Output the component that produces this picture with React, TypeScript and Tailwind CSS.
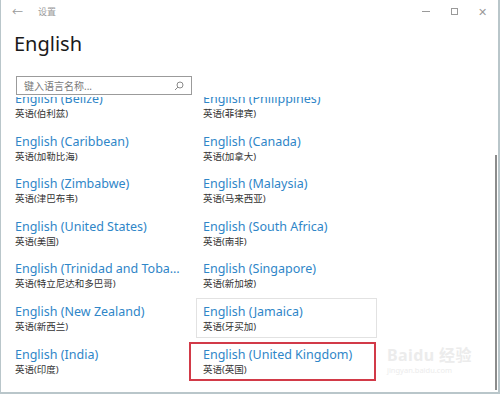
import React from "react";

type Lang = { en: string; zh: string; hover?: boolean; marked?: boolean };

const rows: [Lang, Lang][] = [
  [
    { en: "English (Belize)", zh: "英语(伯利兹)" },
    { en: "English (Philippines)", zh: "英语(菲律宾)" },
  ],
  [
    { en: "English (Caribbean)", zh: "英语(加勒比海)" },
    { en: "English (Canada)", zh: "英语(加拿大)" },
  ],
  [
    { en: "English (Zimbabwe)", zh: "英语(津巴布韦)" },
    { en: "English (Malaysia)", zh: "英语(马来西亚)" },
  ],
  [
    { en: "English (United States)", zh: "英语(美国)" },
    { en: "English (South Africa)", zh: "英语(南非)" },
  ],
  [
    { en: "English (Trinidad and Toba…", zh: "英语(特立尼达和多巴哥)" },
    { en: "English (Singapore)", zh: "英语(新加坡)" },
  ],
  [
    { en: "English (New Zealand)", zh: "英语(新西兰)" },
    { en: "English (Jamaica)", zh: "英语(牙买加)", hover: true },
  ],
  [
    { en: "English (India)", zh: "英语(印度)" },
    { en: "English (United Kingdom)", zh: "英语(英国)", marked: true },
  ],
];

const font = { fontFamily: '"Noto Sans", "Noto Sans CJK SC", sans-serif' };

function LangItem({ item }: { item: Lang }) {
  return (
    <div
      className={
        "relative h-[40px] w-[181px] px-[6px] pt-[4px] " +
        (item.hover ? "border border-[#e2e2e2]" : "border border-transparent")
      }
    >
      <div className="text-[12.5px] leading-[17px] text-[#2f86c8] whitespace-nowrap">{item.en}</div>
      <div className="text-[9.5px] leading-[13px] text-[#333]">{item.zh}</div>
      {item.marked && (
        <div className="absolute left-[-8px] top-[0px] h-[39px] w-[187px] border-2 border-[#d23a48]" />
      )}
    </div>
  );
}

function SearchIcon() {
  return (
    <svg width="10" height="10" viewBox="0 0 10 10" fill="none" stroke="#8a8a8a" strokeWidth="1">
      <circle cx="6" cy="4" r="3" />
      <path d="M3.9 6.1 L1 9" />
    </svg>
  );
}

export default function App() {
  return (
    <div className="w-[500px] h-[395px] bg-white overflow-hidden" style={font}>
      <div className="relative h-[394px] w-[500px] border-l border-r-2 border-b-2 border-[#b9c6ca] flex flex-col">
        {/* title bar */}
        <div className="h-[22px] flex items-center text-[#9a9a9a]">
          <span className="ml-[11px] text-[11px] leading-none">←</span>
          <span className="ml-[15px] text-[9px] leading-none">设置</span>
          <div className="ml-auto flex items-center">
            <span className="w-[28px] flex justify-center">
              <span className="block w-[8px] h-px bg-[#9a9a9a]" />
            </span>
            <span className="w-[28px] flex justify-center">
              <span className="block w-[7px] h-[7px] border border-[#9a9a9a]" />
            </span>
            <span className="w-[28px] flex justify-center mr-[2px] text-[11px] leading-none">✕</span>
          </div>
        </div>

        <div className="ml-[13px] mt-[9px] text-[20px] leading-[26px] text-[#1a1a1a]">English</div>

        <div className="ml-[15px] mt-[19px] w-[176px] h-[19px] border border-[#9b9b9b] flex items-center px-[7px]">
          <span className="text-[10px] text-[#7a7a7a] leading-none">键入语言名称...</span>
          <span className="ml-auto">
            <SearchIcon />
          </span>
        </div>

        <div className="mt-[2px] flex-1 overflow-hidden">
          <div className="ml-[7px] mt-[-12px] flex flex-col gap-y-[2.6px]">
            {rows.map((r, i) => (
              <div key={i} className="flex gap-x-[7px]">
                <LangItem item={r[0]} />
                <LangItem item={r[1]} />
              </div>
            ))}
          </div>
        </div>

        {/* scrollbar thumb */}
        <div className="absolute right-[1px] top-[155px] w-[2px] h-[235px] bg-[#8c8c8c]" />

        {/* watermark */}
        <div className="absolute left-[386px] top-[347px] text-[#ececec] leading-none pointer-events-none">
          <div className="text-[16px] font-bold tracking-wide">Baidu 经验</div>
          <div className="text-[7.5px] mt-[4px]">jingyan.baidu.com</div>
        </div>
      </div>
    </div>
  );
}
